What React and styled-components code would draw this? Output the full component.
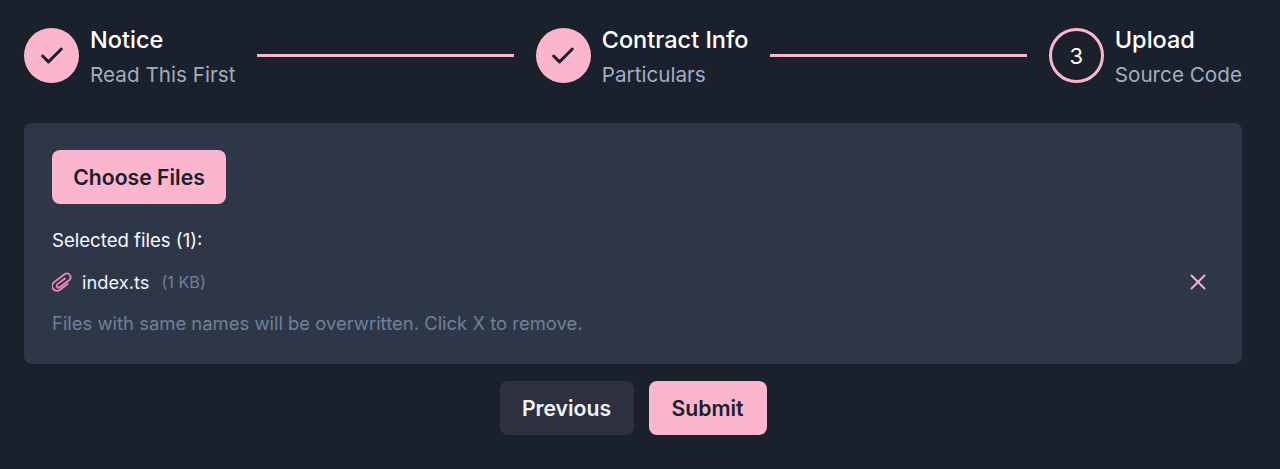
import React from 'react';
import styled, { createGlobalStyle } from 'styled-components';
import { Check, X } from 'lucide-react';

const GlobalStyle = createGlobalStyle`
  html, body {
    margin: 0;
    background: #1a202c;
  }
  body {
    font-family: Inter, "Liberation Sans", sans-serif;
    color: #fff;
  }
  * {
    box-sizing: border-box;
  }
`;

const Page = styled.div`
  width: 1280px;
  height: 469px;
  padding: 28px 38px 0 24px;
  overflow: hidden;
`;

const Steps = styled.div`
  display: flex;
  align-items: flex-start;
  height: 95px;
`;

const Step = styled.div`
  display: flex;
  flex-shrink: 0;
`;

const StepCircle = styled.div`
  width: 55px;
  height: 55px;
  border-radius: 50%;
  display: flex;
  align-items: center;
  justify-content: center;
  margin-right: 11px;
  font-size: 22px;
  background: ${(p) => (p.$done ? '#fbb6ce' : 'transparent')};
  border: ${(p) => (p.$done ? 'none' : '3px solid #fbb6ce')};
  color: ${(p) => (p.$done ? '#1a202c' : '#fff')};
`;

const StepText = styled.div`
  display: flex;
  flex-direction: column;
  margin-top: -6px;
`;

const StepTitle = styled.div`
  font-size: 23.5px;
  font-weight: 500;
  line-height: 36px;
`;

const StepSub = styled.div`
  font-size: 20.7px;
  line-height: 34px;
  color: #a0aec0;
`;

const Line = styled.div`
  flex: 1;
  height: 3px;
  margin: 26px 22px 0;
  background: #fbb6ce;
`;

const Panel = styled.div`
  height: 241px;
  padding: 27px 28px;
  background: #2d3748;
  border-radius: 8px;
`;

const Button = styled.button`
  display: block;
  width: ${(p) => p.$width}px;
  height: 54px;
  padding: 0;
  border: none;
  border-radius: 8px;
  font-family: inherit;
  font-size: 21.2px;
  font-weight: 600;
  background: ${(p) => (p.$muted ? '#2d303e' : '#fbb6ce')};
  color: ${(p) => (p.$muted ? '#edf2f7' : '#1a202c')};
`;

const Selected = styled.div`
  margin-top: 24px;
  font-size: 18.6px;
  line-height: 24px;
  color: #f7fafc;
`;

const FileRow = styled.div`
  display: flex;
  align-items: center;
  margin-top: 18px;
  height: 24px;
  color: #f687b3;
`;

const FileName = styled.span`
  margin-left: 10px;
  font-size: 18.3px;
  color: #edf2f7;
`;

const FileSize = styled.span`
  margin-left: 12px;
  font-size: 16.2px;
  color: #718096;
`;

const Remove = styled.span`
  display: flex;
  margin-left: auto;
  margin-right: 3px;
  color: #fbb6ce;
`;

const Hint = styled.div`
  margin-top: 17px;
  font-size: 18.45px;
  line-height: 24px;
  color: #718096;
`;

const Footer = styled.div`
  display: flex;
  justify-content: center;
  gap: 15px;
  margin-top: 17px;
`;

const steps = [
  { title: 'Notice', sub: 'Read This First', done: true },
  { title: 'Contract Info', sub: 'Particulars', done: true },
  { title: 'Upload', sub: 'Source Code', done: false, num: 3 },
];

function ClipIcon() {
  return (
    <svg width="20" height="20" viewBox="2.2 1.5 17.6 17.6" fill="none" stroke="currentColor" strokeWidth="1.55" strokeLinecap="round" strokeLinejoin="round">
      <path d="M13.6 7.2 7 12.2a1.7 1.7 0 0 0 2.1 2.7l8.4-6.4a3.3 3.3 0 0 0-4-5.2L3.8 10.6a4.3 4.3 0 0 0 5.2 6.8l7-5.3" />
    </svg>
  );
}

export default function App() {
  return (
    <Page>
      <GlobalStyle />
      <Steps>
        {steps.map((s, i) => (
          <React.Fragment key={s.title}>
            <Step>
              <StepCircle $done={s.done}>
                {s.done ? <Check size={28} strokeWidth={2.6} /> : s.num}
              </StepCircle>
              <StepText>
                <StepTitle>{s.title}</StepTitle>
                <StepSub>{s.sub}</StepSub>
              </StepText>
            </Step>
            {i < steps.length - 1 && <Line />}
          </React.Fragment>
        ))}
      </Steps>
      <Panel>
        <Button $width={174}>Choose Files</Button>
        <Selected>Selected files (1):</Selected>
        <FileRow>
          <ClipIcon />
          <FileName>index.ts</FileName>
          <FileSize>(1 KB)</FileSize>
          <Remove>
            <X size={26} strokeWidth={1.7} />
          </Remove>
        </FileRow>
        <Hint>Files with same names will be overwritten. Click X to remove.</Hint>
      </Panel>
      <Footer>
        <Button $muted $width={134}>Previous</Button>
        <Button $width={118}>Submit</Button>
      </Footer>
    </Page>
  );
}
